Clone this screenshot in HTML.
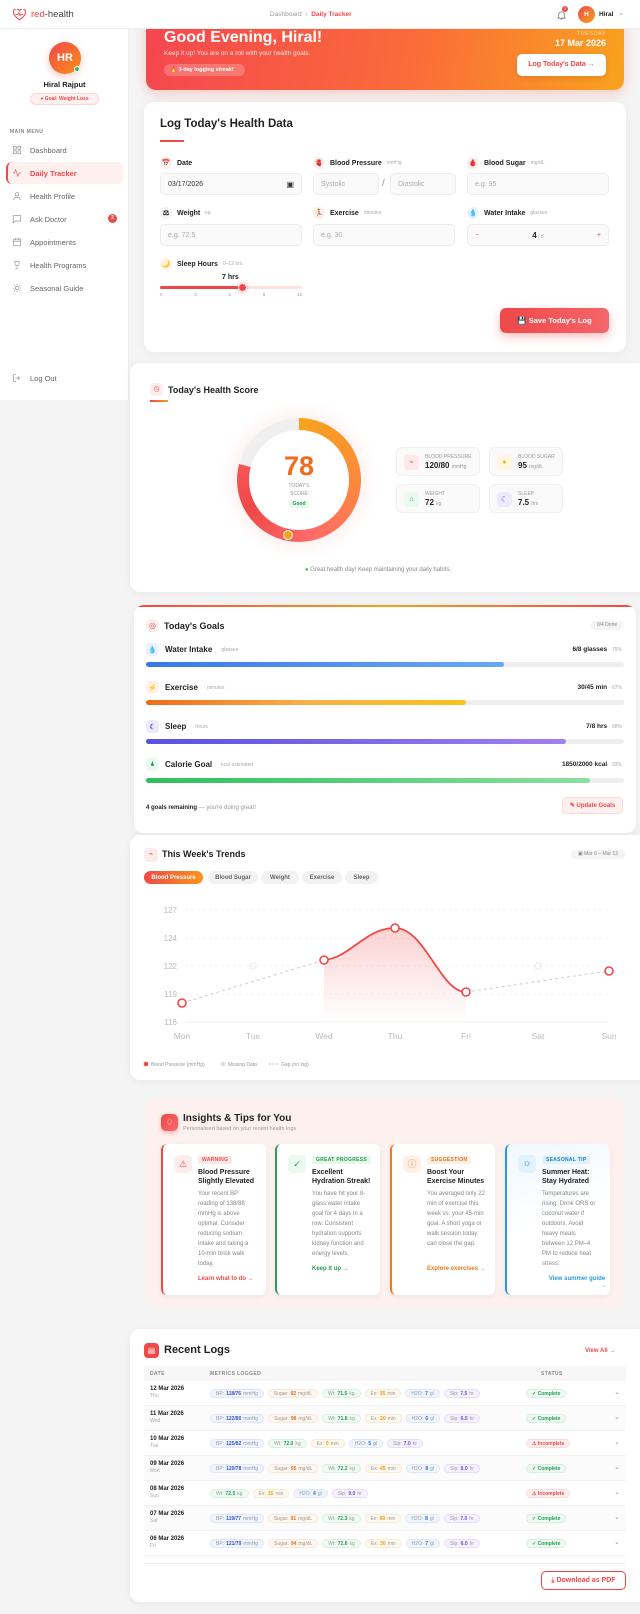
<!DOCTYPE html>
<html><head><meta charset="utf-8"><style>
*{box-sizing:border-box;margin:0;padding:0}
body{width:640px;height:1614px;background:#f4f4f5;font-family:"Liberation Sans",sans-serif;color:#222;position:relative;overflow:hidden}
.a{position:absolute}
.card{position:absolute;background:#fff;border-radius:10px;box-shadow:0 2px 10px rgba(0,0,0,.05)}
.lbl{font-size:7px;font-weight:bold;color:#222;display:flex;align-items:center;gap:5px}
.lbl small{font-weight:normal;color:#aaa;font-size:5px}
.ic{width:12px;height:12px;border-radius:50%;background:#fdecec;display:inline-flex;align-items:center;justify-content:center;font-size:7px}
.inp{position:absolute;height:22px;border:1px solid #ececec;background:#fafafa;border-radius:5px;font-size:7px;color:#aaa;padding:0 7px;display:flex;align-items:center}
.menu{position:absolute;left:12px;font-size:7.5px;color:#666;display:flex;align-items:center;gap:8px}
.menu svg{width:10px;height:10px;stroke:#888;fill:none;stroke-width:1.5}
.stat{position:absolute;width:84px;height:29px;background:#fafafa;border:1px solid #f0f0f0;border-radius:6px}
.stat .si{position:absolute;left:7px;top:7px;width:15px;height:15px;border-radius:4px}
.stat .t{position:absolute;left:28px;top:6px;font-size:5px;color:#999}
.stat .v{position:absolute;left:28px;top:13px;font-size:8px;font-weight:bold}
.stat .v small{font-size:5px;font-weight:normal;color:#999}
.gl{position:absolute;left:146px;font-size:8px;font-weight:bold;display:flex;align-items:center;gap:6px}
.gl small{font-size:5px;color:#aaa;font-weight:normal}
.gr{position:absolute;right:18px;font-size:6.5px;font-weight:bold}
.gr small{font-weight:normal;color:#aaa;font-size:5px}
.bar{position:absolute;left:146px;width:478px;height:5px;border-radius:3px;background:#eee}
.bar div{height:5px;border-radius:3px}
.tab{position:absolute;top:871px;height:13px;border-radius:7px;background:#f2f2f2;font-size:6px;font-weight:bold;color:#666;display:flex;align-items:center;justify-content:center}
.ins{position:absolute;top:1144px;width:105px;height:151px;background:#fff;border-radius:6px;box-shadow:0 2px 6px rgba(0,0,0,.05)}
.ins .ib{position:absolute;left:11px;top:11px;width:18px;height:18px;border-radius:5px}
.ins .tg{position:absolute;left:35px;top:12px;font-size:5px;font-weight:bold;padding:1px 4px;border-radius:2px;letter-spacing:.3px}
.ins .tt{position:absolute;left:35px;top:24px;width:61px;font-size:7px;font-weight:bold;line-height:9px;color:#222}
.ins .bd{position:absolute;left:35px;top:45px;width:58px;font-size:6px;line-height:10px;color:#888}
.ins .lk{position:absolute;left:35px;font-size:6px;font-weight:bold}
.row{position:absolute;left:144px;width:482px;height:25px;border-bottom:1px solid #f2f2f2}
.row .d{position:absolute;left:6px;top:5px;font-size:6px;font-weight:bold}
.row .d small{display:block;font-weight:normal;color:#aaa;font-size:5px;margin-top:1px}
.row .m{position:absolute;left:66px;top:8px;display:flex;gap:4px}
.p{height:9px;border-radius:5px;font-size:5px;color:#999;padding:0 5px;display:flex;align-items:center;border:1px solid}
.p b{margin:0 2px}
.pb{background:#f0f4ff;border-color:#dfe6fb}.pb b{color:#3355cc}
.ps{background:#fff6ef;border-color:#fbe7d6}.ps b{color:#e07020}
.pw{background:#effaf3;border-color:#d9f0e1}.pw b{color:#2a9a55}
.pe{background:#fff8ee;border-color:#f8ebd2}.pe b{color:#f09a10}
.ph{background:#eff5ff;border-color:#dce8f8}.ph b{color:#2a6ad0}
.pl{background:#f5f1ff;border-color:#e6ddfb}.pl b{color:#7a4ad8}
.st{position:absolute;left:382px;top:8px;height:9px;border-radius:5px;font-size:5px;font-weight:bold;padding:0 5px;display:flex;align-items:center}
.ok{background:#eefaf2;color:#2a9a55;border:1px solid #d2f0dc}
.no{background:#fff0f0;color:#e84a4a;border:1px solid #fbdada}
.chev{position:absolute;right:6px;top:7px;font-size:7px;color:#999}
</style></head><body>

<!-- banner (under header) -->
<div class="a" style="left:146px;top:8px;width:478px;height:82px;border-radius:10px;background:linear-gradient(100deg,#f5464f 0%,#fa6a3a 55%,#f9a21e 100%);box-shadow:0 4px 12px rgba(240,90,60,.25)"></div>
<div class="a" style="left:164px;top:29px;font-size:16px;font-weight:bold;color:#fff">Good Evening, Hiral!</div>
<div class="a" style="left:164px;top:50px;font-size:6.5px;color:#ffe4dc">Keep it up! You are on a roll with your health goals.</div>
<div class="a" style="left:164px;top:64px;width:81px;height:12px;border-radius:6px;background:rgba(255,255,255,.22);font-size:5.5px;color:#fff;font-weight:bold;line-height:12px;padding-left:6px">🔥 3-day logging streak!</div>
<div class="a" style="left:540px;top:31px;width:66px;text-align:right;font-size:5.5px;color:#ffd9b0;letter-spacing:.5px">TUESDAY</div>
<div class="a" style="left:520px;top:38px;width:86px;text-align:right;font-size:9px;font-weight:bold;color:#fff">17 Mar 2026</div>
<div class="a" style="left:517px;top:54px;width:89px;height:22px;border-radius:5px;background:#fff;font-size:7px;color:#f04848;font-weight:bold;text-align:center;line-height:22px;box-shadow:0 2px 6px rgba(0,0,0,.1)">Log Today's Data →</div>

<!-- header -->
<div class="a" style="left:0;top:0;width:640px;height:29px;background:#fff;border-bottom:1px solid #eee"></div>
<svg class="a" style="left:13px;top:9px" width="13" height="12" viewBox="0 0 24 22"><path d="M12 20 C4 14 1 10 1 6.5 A5 5 0 0 1 12 4 A5 5 0 0 1 23 6.5 C23 10 20 14 12 20Z" fill="none" stroke="#f04848" stroke-width="2"/><path d="M5 10h4l2-3 2 5 2-2h4" fill="none" stroke="#f04848" stroke-width="1.6"/></svg>
<div class="a" style="left:31px;top:9px;font-size:9.5px;color:#444"><span style="color:#f04848">red</span>-health</div>
<div class="a" style="left:270px;top:11px;font-size:6.5px;color:#999">Dashboard &nbsp;›&nbsp; <span style="color:#f04848;font-weight:bold">Daily Tracker</span></div>
<svg class="a" style="left:556px;top:9px" width="11" height="12" viewBox="0 0 24 24"><path d="M6 17V11a6 6 0 0 1 12 0v6l2 2H4z M10 21h4" fill="none" stroke="#888" stroke-width="2"/></svg>
<div class="a" style="left:562px;top:6px;width:6px;height:6px;border-radius:50%;background:#f04848;color:#fff;font-size:4px;text-align:center;line-height:6px">3</div>
<div class="a" style="left:578px;top:6px;width:17px;height:17px;border-radius:50%;background:linear-gradient(135deg,#f04848,#f7a21b);color:#fff;font-size:6.5px;font-weight:bold;text-align:center;line-height:17px">H</div>
<div class="a" style="left:599px;top:11px;font-size:6.5px;font-weight:bold">Hiral</div>
<div class="a" style="left:618px;top:9px;font-size:7px;color:#999">⌄</div>

<!-- sidebar -->
<div class="a" style="left:0;top:29px;width:129px;height:371px;background:#fff;border-right:1px solid #eee"></div>
<div class="a" style="left:49px;top:42px;width:32px;height:32px;border-radius:50%;background:linear-gradient(135deg,#f04848,#f7901b);color:#fff;font-size:11px;font-weight:bold;text-align:center;line-height:32px;box-shadow:0 3px 8px rgba(240,80,50,.3)">HR</div>
<div class="a" style="left:74px;top:66px;width:6px;height:6px;border-radius:50%;background:#2fbf5a;border:1px solid #fff"></div>
<div class="a" style="left:0;top:80px;width:129px;text-align:center;font-size:7.5px;font-weight:bold">Hiral Rajput</div>
<div class="a" style="left:30px;top:93px;width:69px;height:12px;border-radius:6px;background:#fff0f0;border:1px solid #fbd8d8;font-size:5px;color:#f04848;font-weight:bold;text-align:center;line-height:11px">● Goal: Weight Loss</div>
<div class="a" style="left:10px;top:129px;font-size:5px;color:#888;font-weight:bold;letter-spacing:.5px">MAIN MENU</div>
<div class="a" style="left:6px;top:162px;width:117px;height:22px;border-radius:6px;background:#fff0f0;border-left:2px solid #f04848"></div>
<div class="menu" style="top:145px"><svg viewBox="0 0 24 24"><rect x="3" y="3" width="7" height="7"/><rect x="14" y="3" width="7" height="7"/><rect x="3" y="14" width="7" height="7"/><rect x="14" y="14" width="7" height="7"/></svg>Dashboard</div>
<div class="menu" style="top:168px;color:#f04848;font-weight:bold"><svg viewBox="0 0 24 24" style="stroke:#f04848"><path d="M2 12h4l3-8 5 16 3-8h5"/></svg>Daily Tracker</div>
<div class="menu" style="top:191px"><svg viewBox="0 0 24 24"><circle cx="12" cy="8" r="4"/><path d="M4 22c0-5 4-7 8-7s8 2 8 7"/></svg>Health Profile</div>
<div class="menu" style="top:214px"><svg viewBox="0 0 24 24"><path d="M3 4h18v13H8l-5 4z"/></svg>Ask Doctor</div>
<div class="a" style="left:108px;top:214px;width:9px;height:9px;border-radius:50%;background:#f04848;color:#fff;font-size:5px;text-align:center;line-height:9px;font-weight:bold">2</div>
<div class="menu" style="top:237px"><svg viewBox="0 0 24 24"><rect x="3" y="5" width="18" height="16" rx="2"/><path d="M3 10h18M8 2v5M16 2v5"/></svg>Appointments</div>
<div class="menu" style="top:260px"><svg viewBox="0 0 24 24"><path d="M7 3h10v6a5 5 0 0 1-10 0z M12 14v4 M8 21h8"/></svg>Health Programs</div>
<div class="menu" style="top:283px"><svg viewBox="0 0 24 24"><circle cx="12" cy="12" r="4"/><path d="M12 2v3M12 19v3M2 12h3M19 12h3M5 5l2 2M17 17l2 2M5 19l2-2M17 7l2-2"/></svg>Seasonal Guide</div>
<div class="menu" style="top:373px"><svg viewBox="0 0 24 24"><path d="M10 4H4v16h6M14 8l4 4-4 4M18 12H8"/></svg>Log Out</div>

<!-- log card -->
<div class="card" style="left:144px;top:102px;width:482px;height:250px"></div>
<div class="a" style="left:160px;top:118px;font-size:11.5px;font-weight:bold">Log Today's Health Data</div>
<div class="a" style="left:160px;top:140px;width:24px;height:2px;background:#f04848"></div>
<div class="lbl a" style="left:160px;top:157px"><span class="ic">📅</span>Date</div>
<div class="inp" style="left:160px;top:173px;width:142px;color:#333">03/17/2026<span style="margin-left:auto;font-size:8px">▣</span></div>
<div class="lbl a" style="left:313px;top:157px"><span class="ic">🫀</span>Blood Pressure <small>mmHg</small></div>
<div class="inp" style="left:313px;top:173px;width:66px">Systolic</div>
<div class="a" style="left:382px;top:178px;font-size:10px;color:#999">/</div>
<div class="inp" style="left:390px;top:173px;width:66px">Diastolic</div>
<div class="lbl a" style="left:467px;top:157px"><span class="ic">🩸</span>Blood Sugar <small>mg/dL</small></div>
<div class="inp" style="left:467px;top:173px;width:142px">e.g. 95</div>
<div class="lbl a" style="left:160px;top:207px"><span class="ic" style="background:#f2f2f2">⚖</span>Weight <small>kg</small></div>
<div class="inp" style="left:160px;top:224px;width:142px">e.g. 72.5</div>
<div class="lbl a" style="left:313px;top:207px"><span class="ic">🏃</span>Exercise <small>minutes</small></div>
<div class="inp" style="left:313px;top:224px;width:142px">e.g. 30</div>
<div class="lbl a" style="left:467px;top:207px"><span class="ic" style="background:#eaf3ff">💧</span>Water Intake <small>glasses</small></div>
<div class="inp" style="left:467px;top:224px;width:142px;color:#f04848"><span>−</span><span style="margin-left:auto;margin-right:auto;color:#222;font-weight:bold;font-size:8px">4<small style="font-size:5px;color:#aaa;font-weight:normal"> / 8</small></span><span>+</span></div>
<div class="lbl a" style="left:160px;top:258px"><span class="ic" style="background:#fff4e0">🌙</span>Sleep Hours <small>0–12 hrs</small></div>
<div class="a" style="left:222px;top:274px;font-size:7px;font-weight:bold">7 hrs</div>
<div class="a" style="left:160px;top:286px;width:142px;height:3px;border-radius:2px;background:#fde0e0"></div>
<div class="a" style="left:160px;top:286px;width:83px;height:3px;border-radius:2px;background:#f04848"></div>
<div class="a" style="left:238px;top:283px;width:9px;height:9px;border-radius:50%;background:#f04848;border:1px solid #fff;box-shadow:0 0 3px rgba(240,72,72,.6)"></div>
<div class="a" style="left:160px;top:292px;width:142px;font-size:4.5px;color:#999;display:flex;justify-content:space-between"><span>0</span><span>3</span><span>6</span><span>9</span><span>12</span></div>
<div class="a" style="left:500px;top:308px;width:109px;height:25px;border-radius:6px;background:linear-gradient(90deg,#f04848,#f5656a);color:#fff;font-size:7.5px;font-weight:bold;text-align:center;line-height:25px;box-shadow:0 4px 10px rgba(240,72,72,.35)">💾 Save Today's Log</div>

<!-- score card -->
<div class="card" style="left:130px;top:363px;width:520px;height:229px"></div>
<div class="a" style="left:150px;top:383px;width:13px;height:13px;border-radius:4px;background:#fdecec;color:#f04848;font-size:7px;text-align:center;line-height:13px">◷</div>
<div class="a" style="left:168px;top:385px;font-size:9px;font-weight:bold">Today's Health Score</div>
<div class="a" style="left:150px;top:400px;width:18px;height:1.5px;background:linear-gradient(90deg,#f04848,#f7a21b)"></div>
<div class="a" style="left:237px;top:418px;width:124px;height:124px;border-radius:50%;background:conic-gradient(#f9a21b 0deg,#fb8a3a 90deg,#ff6a6a 170deg,#f04848 240deg,#f65656 285deg,#efefef 285deg,#efefef 360deg);box-shadow:0 0 20px rgba(240,80,60,.15)"></div>
<div class="a" style="left:249px;top:430px;width:100px;height:100px;border-radius:50%;background:#fff"></div>
<div class="a" style="left:237px;top:451px;width:124px;text-align:center;font-size:27px;font-weight:bold;color:#f26a1b">78</div>
<div class="a" style="left:237px;top:483px;width:124px;text-align:center;font-size:5px;color:#999;line-height:7.5px">TODAY'S<br>SCORE</div>
<div class="a" style="left:289px;top:500px;width:20px;height:8px;border-radius:3px;background:#eafaee;color:#2a9a55;font-size:5px;font-weight:bold;text-align:center;line-height:8px">Good</div>
<div class="a" style="left:283px;top:530px;width:10px;height:10px;border-radius:50%;background:#f7a21b;border:1.5px solid #fff;box-shadow:0 0 2px rgba(0,0,0,.2)"></div>
<div class="stat" style="left:396px;top:447px"><div class="si" style="background:#fde8ea;color:#f04848;font-size:7px;text-align:center;line-height:15px">⌁</div><div class="t">BLOOD PRESSURE</div><div class="v">120/80 <small>mmHg</small></div></div>
<div class="stat" style="left:489px;top:447px;width:74px"><div class="si" style="background:#fff6e0;color:#f0b020;font-size:7px;text-align:center;line-height:15px">●</div><div class="t">BLOOD SUGAR</div><div class="v">95 <small>mg/dL</small></div></div>
<div class="stat" style="left:396px;top:484px"><div class="si" style="background:#eafaee;color:#2a9a55;font-size:7px;text-align:center;line-height:15px">⌂</div><div class="t">WEIGHT</div><div class="v">72 <small>kg</small></div></div>
<div class="stat" style="left:489px;top:484px;width:74px"><div class="si" style="background:#eeeafd;color:#6a5ad8;font-size:8px;text-align:center;line-height:15px">☾</div><div class="t">SLEEP</div><div class="v">7.5 <small>hrs</small></div></div>
<div class="a" style="left:305px;top:567px;font-size:6px;color:#888"><span style="color:#2fbf5a">●</span> Great health day! Keep maintaining your daily habits.</div>

<!-- goals card -->
<div class="card" style="left:134px;top:605px;width:502px;height:228px;overflow:hidden"><div style="height:2px;background:linear-gradient(90deg,#f04848,#f7a21b,#f04848)"></div></div>
<div class="a" style="left:146px;top:619px;width:13px;height:13px;border-radius:50%;background:#fdecec;color:#f06060;font-size:8px;text-align:center;line-height:13px">◎</div>
<div class="a" style="left:164px;top:621px;font-size:9px;font-weight:bold">Today's Goals</div>
<div class="a" style="left:591px;top:621px;width:32px;height:9px;border-radius:5px;background:#f4f4f4;font-size:5px;color:#888;text-align:center;line-height:9px">0/4 Done</div>
<div class="gl" style="top:643px"><span class="ic" style="width:13px;height:13px;border-radius:4px;background:#eaf1ff;color:#3060e0">💧</span>Water Intake <small>· glasses</small></div><div class="gr" style="top:646px">6/8 glasses <small>· 75%</small></div>
<div class="bar" style="top:662px"><div style="width:358px;background:linear-gradient(90deg,#3a78e8,#6aa8f5)"></div></div>
<div class="gl" style="top:681px"><span class="ic" style="width:13px;height:13px;border-radius:4px;background:#fff1e8;color:#f06a1b">⚡</span>Exercise <small>· minutes</small></div><div class="gr" style="top:684px">30/45 min <small>· 67%</small></div>
<div class="bar" style="top:700px"><div style="width:320px;background:linear-gradient(90deg,#f06a1b,#f9b04a,#f9c21b)"></div></div>
<div class="gl" style="top:720px"><span class="ic" style="width:13px;height:13px;border-radius:4px;background:#eeeafd;color:#5a4ad8">☾</span>Sleep <small>· hours</small></div><div class="gr" style="top:723px">7/8 hrs <small>· 88%</small></div>
<div class="bar" style="top:739px"><div style="width:420px;background:linear-gradient(90deg,#5a50e0,#a080f0)"></div></div>
<div class="gl" style="top:758px"><span class="ic" style="width:13px;height:13px;border-radius:4px;background:#eafaee;color:#2a9a55">🌢</span>Calorie Goal <small>· kcal estimated</small></div><div class="gr" style="top:761px">1850/2000 kcal <small>· 93%</small></div>
<div class="bar" style="top:778px"><div style="width:444px;background:linear-gradient(90deg,#2fbf5a,#8ae0a0)"></div></div>
<div class="a" style="left:146px;top:805px;font-size:6px;color:#999"><b style="color:#222">4 goals remaining</b> — you're doing great!</div>
<div class="a" style="left:562px;top:797px;width:61px;height:17px;border-radius:5px;background:#fff0f0;border:1px solid #fbd8d8;font-size:6px;color:#f04848;font-weight:bold;text-align:center;line-height:16px">✎ Update Goals</div>

<!-- trends card -->
<div class="card" style="left:130px;top:835px;width:520px;height:245px"></div>
<div class="a" style="left:144px;top:848px;width:14px;height:14px;border-radius:4px;background:#fdecec;color:#f04848;font-size:7px;text-align:center;line-height:14px">⌁</div>
<div class="a" style="left:162px;top:849px;font-size:9px;font-weight:bold">This Week's Trends</div>
<div class="a" style="left:571px;top:850px;width:54px;height:9px;border-radius:5px;background:#f4f4f4;font-size:5px;color:#888;text-align:center;line-height:9px">▣ Mar 6 – Mar 12</div>
<div class="tab" style="left:144px;width:59px;background:linear-gradient(90deg,#f04848,#f9951b);color:#fff">Blood Pressure</div>
<div class="tab" style="left:208px;width:50px">Blood Sugar</div>
<div class="tab" style="left:261px;width:38px">Weight</div>
<div class="tab" style="left:302px;width:40px">Exercise</div>
<div class="tab" style="left:345px;width:33px">Sleep</div>
<svg class="a" style="left:0;top:0" width="640" height="1100">
<defs><linearGradient id="fg" x1="0" y1="0" x2="0" y2="1"><stop offset="0" stop-color="#f04848" stop-opacity=".25"/><stop offset="1" stop-color="#f04848" stop-opacity="0"/></linearGradient></defs>
<g stroke="#f0f0f0" stroke-width=".7" stroke-dasharray="3 3"><line x1="185" y1="910" x2="608" y2="910"/><line x1="185" y1="938" x2="608" y2="938"/><line x1="185" y1="966" x2="608" y2="966"/><line x1="185" y1="994" x2="608" y2="994"/></g>
<line x1="185" y1="1022" x2="608" y2="1022" stroke="#eee" stroke-width=".8"/>
<g font-family="Liberation Sans" font-size="8" fill="#bbb" text-anchor="end"><text x="177" y="913">127</text><text x="177" y="941">124</text><text x="177" y="969">122</text><text x="177" y="997">119</text><text x="177" y="1025">116</text></g>
<g font-family="Liberation Sans" font-size="8.5" fill="#bbb" text-anchor="middle"><text x="182" y="1039">Mon</text><text x="253" y="1039">Tue</text><text x="324" y="1039">Wed</text><text x="395" y="1039">Thu</text><text x="466" y="1039">Fri</text><text x="538" y="1039">Sat</text><text x="609" y="1039">Sun</text></g>
<path d="M324,960 C350,958 365,928 395,928 C425,928 440,992 466,992 L466,1022 L324,1022Z" fill="url(#fg)"/>
<path d="M182,1003 L324,960 M466,992 L609,971" stroke="#ccc" stroke-width="1" stroke-dasharray="3 3" fill="none"/>
<path d="M324,960 C350,958 365,928 395,928 C425,928 440,992 466,992" stroke="#f04848" stroke-width="1.8" fill="none"/>
<g fill="#fff" stroke="#f04848" stroke-width="1.6"><circle cx="182" cy="1003" r="4"/><circle cx="324" cy="960" r="4"/><circle cx="395" cy="928" r="4"/><circle cx="466" cy="992" r="4"/><circle cx="609" cy="971" r="4"/></g>
<g fill="none" stroke="#ccc" stroke-width=".8" stroke-dasharray="1.5 1.5"><circle cx="253" cy="966" r="3"/><circle cx="538" cy="966" r="3"/></g>
<circle cx="146" cy="1064" r="2.3" fill="#f04848"/><text x="151" y="1066" font-family="Liberation Sans" font-size="5" fill="#999">Blood Pressure (mmHg)</text>
<circle cx="223" cy="1064" r="2.3" fill="#ddd"/><text x="228" y="1066" font-family="Liberation Sans" font-size="5" fill="#999">Missing Data</text>
<line x1="269" y1="1064" x2="278" y2="1064" stroke="#bbb" stroke-dasharray="2 1.5"/><text x="281" y="1066" font-family="Liberation Sans" font-size="5" fill="#999">Gap (no log)</text>
</svg>

<!-- insights -->
<div class="a" style="left:146px;top:1098px;width:478px;height:210px;border-radius:10px;background:#fdf1ef"></div>
<div class="a" style="left:161px;top:1114px;width:17px;height:17px;border-radius:5px;background:linear-gradient(135deg,#f04848,#f76a6a);color:#fff;font-size:9px;text-align:center;line-height:17px;box-shadow:0 2px 5px rgba(240,72,72,.35)">♢</div>
<div class="a" style="left:183px;top:1113px;font-size:10px;font-weight:bold">Insights &amp; Tips for You</div>
<div class="a" style="left:183px;top:1126px;font-size:5.5px;color:#999">Personalised based on your recent health logs</div>
<div class="ins" style="left:161px;border-left:2px solid #f04848"><div class="ib" style="background:#fdecec;color:#f04848;font-size:9px;text-align:center;line-height:18px">⚠</div><div class="tg" style="background:#fde8e8;color:#f04848">WARNING</div><div class="tt">Blood Pressure Slightly Elevated</div><div class="bd">Your recent BP reading of 138/88 mmHg is above optimal. Consider reducing sodium intake and taking a 10-min brisk walk today.</div><div class="lk" style="top:132px;color:#f04848">Learn what to do →</div></div>
<div class="ins" style="left:275px;border-left:2px solid #2a9a55"><div class="ib" style="background:#eafaee;color:#2a9a55;font-size:9px;text-align:center;line-height:18px">✓</div><div class="tg" style="background:#e6f7ec;color:#2a9a55">GREAT PROGRESS</div><div class="tt">Excellent Hydration Streak!</div><div class="bd">You have hit your 8-glass water intake goal for 4 days in a row. Consistent hydration supports kidney function and energy levels.</div><div class="lk" style="top:122px;color:#2a9a55">Keep it up →</div></div>
<div class="ins" style="left:390px;border-left:2px solid #f07a1b"><div class="ib" style="background:#fff1e6;color:#f07a1b;font-size:9px;text-align:center;line-height:18px">ⓘ</div><div class="tg" style="background:#fff0e4;color:#e07020">SUGGESTION</div><div class="tt">Boost Your Exercise Minutes</div><div class="bd">You averaged only 22 min of exercise this week vs. your 45-min goal. A short yoga or walk session today can close the gap.</div><div class="lk" style="top:122px;color:#f07a1b">Explore exercises →</div></div>
<div class="ins" style="left:505px;border-left:2px solid #2a9ae0;background:linear-gradient(160deg,#f0f8ff,#fff 50%)"><div class="ib" style="background:#e2f2fd;color:#2a9ae0;font-size:10px;text-align:center;line-height:18px">☼</div><div class="tg" style="background:#e2f2fd;color:#1a80c8">SEASONAL TIP</div><div class="tt">Summer Heat: Stay Hydrated</div><div class="bd">Temperatures are rising. Drink ORS or coconut water if outdoors. Avoid heavy meals between 12 PM–4 PM to reduce heat stress.</div><div class="lk" style="top:132px;left:40px;width:60px;color:#2a9ae0;text-align:center;line-height:7px">View summer guide <span style="float:right">→</span></div></div>

<!-- recent logs -->
<div class="card" style="left:130px;top:1329px;width:520px;height:273px"></div>
<div class="a" style="left:144px;top:1343px;width:15px;height:15px;border-radius:4px;background:#f04848;color:#fff;font-size:8px;text-align:center;line-height:15px">▤</div>
<div class="a" style="left:164px;top:1344px;font-size:11px;font-weight:bold">Recent Logs</div>
<div class="a" style="left:585px;top:1348px;font-size:6px;color:#f04848;font-weight:bold">View All →</div>
<div class="a" style="left:144px;top:1366px;width:482px;height:15px;background:#f7f7f7;font-size:5px;color:#888;font-weight:bold;letter-spacing:.4px"><span class="a" style="left:6px;top:5px">DATE</span><span class="a" style="left:66px;top:5px">METRICS LOGGED</span><span class="a" style="left:397px;top:5px">STATUS</span></div>

<div class="row" style="top:1381px"><div class="d">12 Mar 2026<small>Thu</small></div><div class="m"><span class="p pb">BP:<b>118/76</b>mmHg</span><span class="p ps">Sugar:<b>92</b>mg/dL</span><span class="p pw">Wt:<b>71.5</b>kg</span><span class="p pe">Ex:<b>35</b>min</span><span class="p ph">H2O:<b>7</b>gl</span><span class="p pl">Slp:<b>7.5</b>hr</span></div><div class="st ok">✓ Complete</div><div class="chev">⌄</div></div>
<div class="row" style="top:1406px;background:#fbfbfb"><div class="d">11 Mar 2026<small>Wed</small></div><div class="m"><span class="p pb">BP:<b>122/80</b>mmHg</span><span class="p ps">Sugar:<b>98</b>mg/dL</span><span class="p pw">Wt:<b>71.8</b>kg</span><span class="p pe">Ex:<b>20</b>min</span><span class="p ph">H2O:<b>6</b>gl</span><span class="p pl">Slp:<b>6.5</b>hr</span></div><div class="st ok">✓ Complete</div><div class="chev">⌄</div></div>
<div class="row" style="top:1431px"><div class="d">10 Mar 2026<small>Tue</small></div><div class="m"><span class="p pb">BP:<b>125/82</b>mmHg</span><span class="p pw">Wt:<b>72.0</b>kg</span><span class="p pe">Ex:<b>0</b>min</span><span class="p ph">H2O:<b>5</b>gl</span><span class="p pl">Slp:<b>7.0</b>hr</span></div><div class="st no">⚠ Incomplete</div><div class="chev">⌄</div></div>
<div class="row" style="top:1456px;background:#fbfbfb"><div class="d">09 Mar 2026<small>Mon</small></div><div class="m"><span class="p pb">BP:<b>120/78</b>mmHg</span><span class="p ps">Sugar:<b>95</b>mg/dL</span><span class="p pw">Wt:<b>72.2</b>kg</span><span class="p pe">Ex:<b>45</b>min</span><span class="p ph">H2O:<b>8</b>gl</span><span class="p pl">Slp:<b>8.0</b>hr</span></div><div class="st ok">✓ Complete</div><div class="chev">⌄</div></div>
<div class="row" style="top:1481px"><div class="d">08 Mar 2026<small>Sun</small></div><div class="m"><span class="p pw">Wt:<b>72.5</b>kg</span><span class="p pe">Ex:<b>15</b>min</span><span class="p ph">H2O:<b>4</b>gl</span><span class="p pl">Slp:<b>9.0</b>hr</span></div><div class="st no">⚠ Incomplete</div><div class="chev">⌄</div></div>
<div class="row" style="top:1506px;background:#fbfbfb"><div class="d">07 Mar 2026<small>Sat</small></div><div class="m"><span class="p pb">BP:<b>119/77</b>mmHg</span><span class="p ps">Sugar:<b>91</b>mg/dL</span><span class="p pw">Wt:<b>72.3</b>kg</span><span class="p pe">Ex:<b>60</b>min</span><span class="p ph">H2O:<b>8</b>gl</span><span class="p pl">Slp:<b>7.0</b>hr</span></div><div class="st ok">✓ Complete</div><div class="chev">⌄</div></div>
<div class="row" style="top:1531px"><div class="d">06 Mar 2026<small>Fri</small></div><div class="m"><span class="p pb">BP:<b>121/79</b>mmHg</span><span class="p ps">Sugar:<b>94</b>mg/dL</span><span class="p pw">Wt:<b>72.6</b>kg</span><span class="p pe">Ex:<b>30</b>min</span><span class="p ph">H2O:<b>7</b>gl</span><span class="p pl">Slp:<b>6.0</b>hr</span></div><div class="st ok">✓ Complete</div><div class="chev">⌄</div></div>
<div class="a" style="left:144px;top:1563px;width:482px;height:1px;background:#f0f0f0"></div>
<div class="a" style="left:541px;top:1571px;width:85px;height:19px;border-radius:5px;border:1px solid #f04848;background:#fff;font-size:7px;color:#f04848;font-weight:bold;text-align:center;line-height:17px">⤓ Download as PDF</div>
</body></html>
